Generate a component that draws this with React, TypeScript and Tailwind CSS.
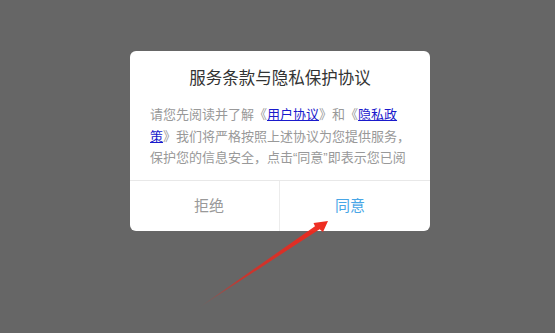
export default function App() {
  return (
    <div
      className="relative h-screen w-full overflow-hidden bg-[#666666] pt-[51px] pl-[130px]"
      style={{ fontFamily: '"Liberation Sans", "Noto Sans CJK SC", sans-serif' }}
    >
      <div className="flex h-[180px] w-[300px] flex-col overflow-hidden rounded-[6px] bg-white">
        <h2 className="pt-[15px] text-center text-[16.5px] leading-[25px] text-[#333333]">
          服务条款与隐私保护协议
        </h2>
        <div className="mt-[13px] h-[66px] overflow-hidden pl-5 pr-[17px] text-[13px] leading-[21.7px] text-[#999999]">
          请您先阅读并了解《<a className="text-[#1a1acc] underline">用户协议</a>》和《
          <a className="text-[#1a1acc] underline">隐私政策</a>》我们将严格按照上述协议为您提供服务，保护您的信息安全，点击“同意”即表示您已阅读并同意全部条款。
        </div>
        <div className="mt-auto flex h-[51px] border-t border-[#e8e8e8]">
          <button className="flex flex-1 items-center justify-center pl-[9px] text-[15px] text-[#999999]">
            拒绝
          </button>
          <div className="w-px bg-[#ececec]" />
          <button className="flex flex-1 items-center justify-center pr-[10px] text-[15px] text-[#48a6e6]">
            同意
          </button>
        </div>
      </div>

      <svg className="pointer-events-none absolute left-0 top-0" width="555" height="333" viewBox="0 0 555 333">
        <defs>
          <linearGradient id="arrowFade" x1="197" y1="309" x2="328" y2="221" gradientUnits="userSpaceOnUse">
            <stop offset="0" stopColor="#e8261c" stopOpacity="0" />
            <stop offset="0.35" stopColor="#e8261c" stopOpacity="0.75" />
            <stop offset="1" stopColor="#ee2a1e" />
          </linearGradient>
        </defs>
        <polygon
          points="197,309 315,226.2 313.5,223 328,221 323,232 319.6,229.2"
          fill="url(#arrowFade)"
        />
      </svg>
    </div>
  );
}
